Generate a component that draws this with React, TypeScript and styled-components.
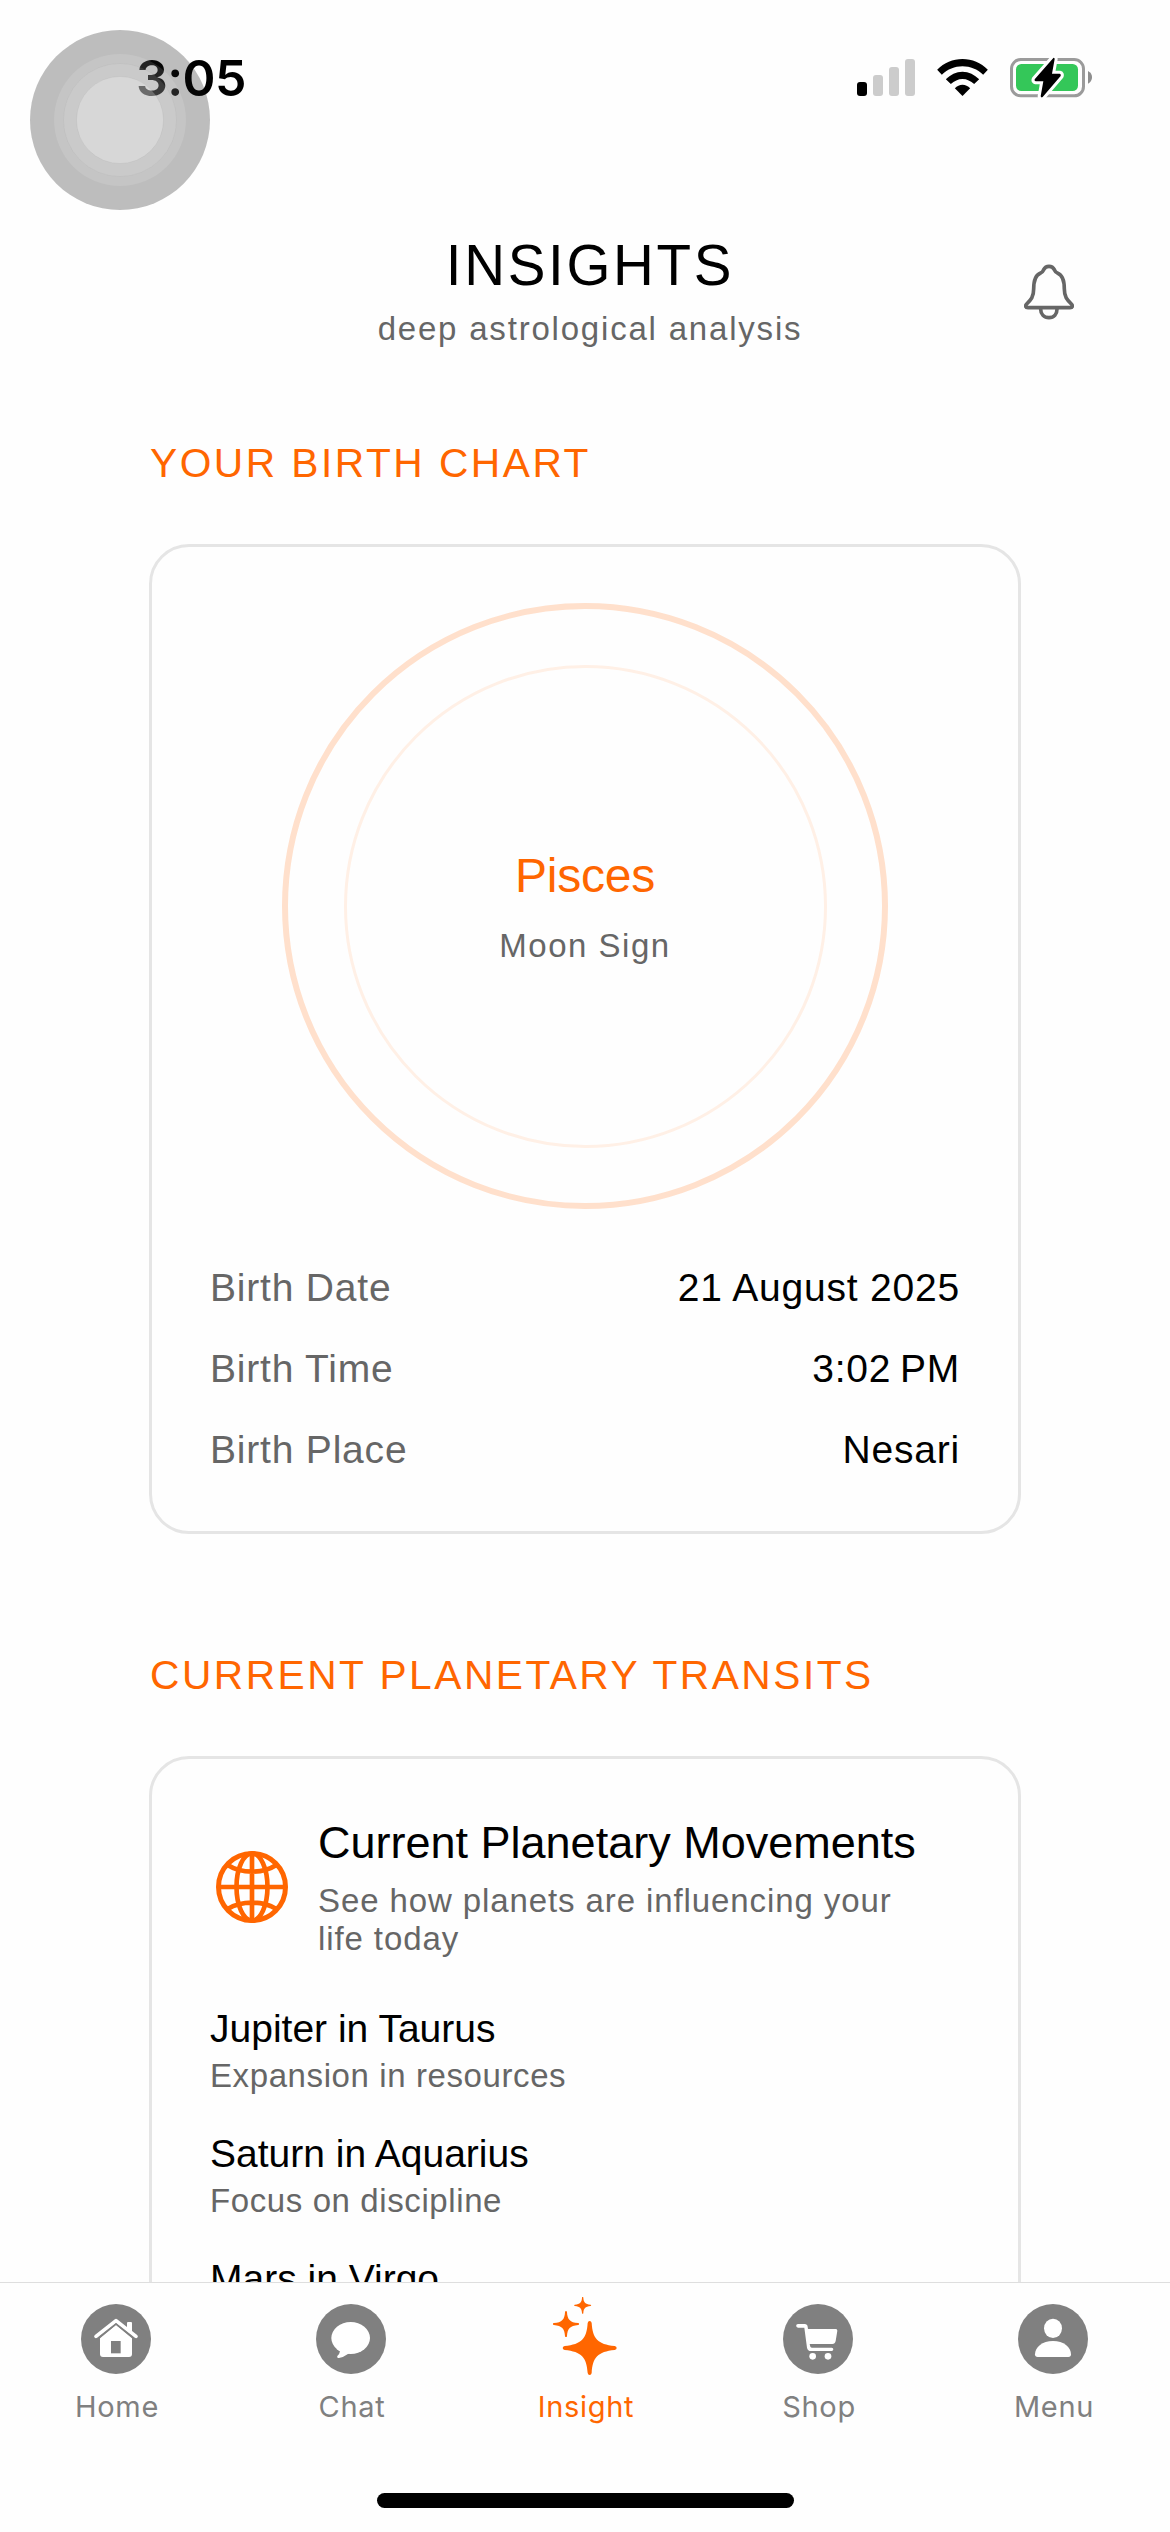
import React from "react";
import styled, { createGlobalStyle } from "styled-components";

const ORANGE = "#ff6600";
const GREY = "#666666";
const TAB_GREY = "#808080";

const GlobalStyle = createGlobalStyle`
  * { box-sizing: border-box; }
  html, body { margin: 0; padding: 0; background: #fff; }
  body { font-family: "Liberation Sans", Arial, sans-serif; color: #000; }
`;

const Screen = styled.div`
  position: relative;
  display: flex;
  flex-direction: column;
  width: 1170px;
  height: 2532px;
  overflow: hidden;
  background: #fefefe;
`;

const StatusBar = styled.div`
  display: flex;
  justify-content: space-between;
  flex: none;
  height: 180px;
  padding: 48px 76px 0 136px;
`;

const Clock = styled.div`
  font-family: Inter, "Liberation Sans", sans-serif;
  font-size: 50px;
  font-weight: 600;
  line-height: 60px;
  letter-spacing: -0.6px;
`;

const StatusIcons = styled.div`
  display: flex;
  gap: 22px;
  padding-top: 8px;
  height: 44px;
`;

const TouchButton = styled.div`
  position: absolute;
  left: 30px;
  top: 30px;
  width: 180px;
  height: 180px;
`;

const Scroll = styled.main`
  flex: 1;
  min-height: 0;
  overflow: hidden;
`;

const Header = styled.header`
  display: grid;
  grid-template-columns: 146px 1fr 146px;
  padding-top: 53px;
  height: 259px;
`;

const HeaderText = styled.div`
  grid-column: 2;
  display: flex;
  flex-direction: column;
  align-items: center;
  gap: 10px;
  padding-left: 10px;
`;

const BellSlot = styled.div`
  padding-top: 31px;
`;

const Title = styled.h1`
  margin: 0;
  font-size: 56.5px;
  font-weight: 400;
  line-height: 66px;
  letter-spacing: 2.7px;
`;

const Subtitle = styled.p`
  margin: 0;
  font-size: 33px;
  line-height: 40px;
  letter-spacing: 1.8px;
  color: ${GREY};
`;

const Section = styled.section`
  padding: 0 149px;
  margin-bottom: 117px;
`;

const SectionTitle = styled.h2`
  margin: 0 0 57px;
  padding-left: 1px;
  font-size: 40.7px;
  font-weight: 400;
  line-height: 48px;
  letter-spacing: 2.5px;
  white-space: nowrap;
  color: ${ORANGE};
`;

const Card = styled.div`
  border: 3px solid #e5e5e5;
  border-radius: 40px;
  padding: 56px 58px 57px;
`;

const OuterRing = styled.div`
  display: flex;
  align-items: center;
  justify-content: center;
  width: 606px;
  height: 606px;
  margin: 0 auto;
  border: 6px solid #ffe0cc;
  border-radius: 50%;
`;

const InnerRing = styled.div`
  display: flex;
  flex-direction: column;
  align-items: center;
  width: 483px;
  height: 483px;
  padding-top: 179px;
  border: 3px solid #fff0e6;
  border-radius: 50%;
`;

const Sign = styled.div`
  font-size: 48px;
  line-height: 58px;
  letter-spacing: -0.2px;
  color: ${ORANGE};
`;

const SignCaption = styled.div`
  margin-top: 21px;
  font-size: 33px;
  line-height: 40px;
  letter-spacing: 1.5px;
  color: ${GREY};
`;

const Facts = styled.dl`
  display: flex;
  flex-direction: column;
  gap: 33px;
  margin: 55px 0 0;
`;

const Fact = styled.div`
  display: flex;
  justify-content: space-between;
  font-size: 39px;
  line-height: 48px;
  letter-spacing: 0.8px;
`;

const FactLabel = styled.dt`
  color: ${GREY};
`;

const FactValue = styled.dd`
  margin: 0;
`;

const Intro = styled.div`
  display: flex;
  align-items: center;
  gap: 24px;
  padding-top: 1px;
  margin-bottom: 48px;
`;

const GlobeSlot = styled.div`
  display: flex;
  justify-content: center;
  flex: none;
  width: 84px;
`;

const IntroTitle = styled.h3`
  margin: 0 0 12px;
  font-size: 45px;
  font-weight: 400;
  line-height: 54px;
  white-space: nowrap;
`;

const IntroText = styled.p`
  margin: 0;
  font-size: 33px;
  line-height: 38px;
  letter-spacing: 0.9px;
  color: ${GREY};
`;

const Transits = styled.div`
  display: flex;
  flex-direction: column;
  gap: 36px;
`;

const TransitName = styled.div`
  font-size: 39px;
  line-height: 46px;
`;

const TransitNote = styled.div`
  margin-top: 5px;
  font-size: 33px;
  line-height: 38px;
  letter-spacing: 0.6px;
  color: ${GREY};
`;

const TabBar = styled.nav`
  display: grid;
  grid-template-columns: 232px 238px 230px 236px 234px;
  grid-template-rows: 210px 15px;
  flex: none;
  height: 250px;
  border-top: 1px solid #dedede;
`;

const Tab = styled.div<{ $active?: boolean }>`
  display: flex;
  flex-direction: column;
  align-items: center;
  padding-top: 14px;
  color: ${(p) => (p.$active ? ORANGE : TAB_GREY)};
`;

const TabLabel = styled.span`
  margin-top: 12px;
  padding-left: 2px;
  font-family: Inter, "Liberation Sans", sans-serif;
  font-size: 29px;
  line-height: 36px;
  letter-spacing: 0.7px;
`;

const HomeIndicator = styled.div`
  grid-column: 1 / -1;
  justify-self: center;
  width: 417px;
  height: 15px;
  border-radius: 8px;
  background: #000;
`;

const Signal = () => (
  <svg width="58" height="40" viewBox="856 56 58 40">
    <rect x="856" y="82" width="10" height="14" rx="3" />
    <g fill="#cccccc">
      <rect x="872" y="75" width="10" height="21" rx="3" />
      <rect x="888" y="67" width="10" height="29" rx="3" />
      <rect x="904" y="59" width="10" height="37" rx="3" />
    </g>
  </svg>
);

const Wifi = () => (
  <svg width="51" height="40" viewBox="409 108 152 120">
    <path d="M409 149 C430 128 456 117 485 117 C514 117 540 128 561 149 L547 164 C530 148 508 139 485 139 C462 139 440 148 423 164Z" />
    <path d="M435 178 C449 164 466 155 485 155 C504 155 521 164 535 178 L520 192 C510 183 498 177 485 177 C472 177 460 183 450 192Z" />
    <path d="M462 205 C469 198 476 194 485 194 C494 194 501 198 508 205 L485 228Z" />
  </svg>
);

const Battery = () => (
  <svg width="84" height="42" viewBox="627 108 252 126">
    <rect x="631.5" y="118.5" width="216" height="109" rx="28" fill="none" stroke="#9b9b9b" strokeWidth="9" />
    <path d="M861 153 Q873 159 873 172 Q873 185 861 191Z" fill="#8e8e8e" />
    <rect x="645" y="132" width="186" height="81" rx="16" fill="#34c759" />
    <path
      d="M757 114 L701 178 Q699 183 704 184 H727 L719 229 Q721 234 725 231 L779 168 Q781 162 776 161 H753 L761 117 Q760 112 757 114Z"
      stroke="#fff"
      strokeWidth="18"
      strokeLinejoin="round"
      paintOrder="stroke"
    />
  </svg>
);

const Bell = () => (
  <svg width="50" height="56" viewBox="672 731 150 168" fill="none" stroke={GREY} strokeWidth="11" strokeLinejoin="round">
    <path d="M684 862 C676 862 675 856 680 851 C693 838 701 830 701 806 C701 780 708 763 722 758 C728 756 729 752 731 748 C734 742 740 738 747 738 C754 738 760 742 763 748 C765 752 766 756 772 758 C786 763 793 780 793 806 C793 830 801 838 814 851 C819 856 818 862 810 862Z" />
    <path d="M722 866 C722 882 732 892 747 892 C762 892 771 882 771 866" />
  </svg>
);

const Globe = () => (
  <svg width="72" height="72" viewBox="-108 -108 216 216" fill="none" stroke={ORANGE} strokeWidth="14">
    <circle r="100.5" strokeWidth="15" />
    <ellipse rx="46.5" ry="101" />
    <path d="M0 -101V101M-101 0H101M-73 -66Q-42 -46 0 -46Q42 -46 73 -66M-73 66Q-42 47 0 47Q42 47 73 66" />
  </svg>
);

const TabIcon = ({ children }: { children: React.ReactNode }) => (
  <svg width="80" height="80" viewBox="-120 -126 240 240" fill="currentColor">
    {children}
  </svg>
);

const Disc = () => <circle r="105" />;

const HomeIcon = () => (
  <TabIcon>
    <Disc />
    <g fill="#fff">
      <path d="M33 -49 Q33 -51 36 -51 H45 Q48 -51 48 -48 V-20 L33 -32Z" />
      <path d="M-48 -2 L0 -42 L48 -2 V45 Q48 54 39 54 H-39 Q-48 54 -48 45Z" />
    </g>
    <path d="M-60 -8 L0 -55 L60 -8" fill="none" stroke="#fff" strokeWidth="11" strokeLinecap="round" strokeLinejoin="round" />
    <path d="M-52 -3 L0 -45 L52 -3" fill="none" stroke="currentColor" strokeWidth="4" />
    <rect x="-15" y="6" width="29" height="37" />
  </TabIcon>
);

const ChatIcon = () => (
  <TabIcon>
    <Disc />
    <g fill="#fff">
      <ellipse cx="-1" cy="-3" rx="58" ry="48" />
      <path d="M-44 30 L-33 37 Q-34 45 -41 51 Q-43 57 -36 57 Q-22 54 -8 44 L0 40Z" />
    </g>
  </TabIcon>
);

const STAR =
  "M-6 -75 Q-5 -81 0 -81 Q5 -81 6 -75 C9 -28 24 -11 75 -6 Q81 -5 81 0 Q81 5 75 6 C24 11 9 28 6 75 Q5 81 0 81 Q-5 81 -6 75 C-9 28 -24 11 -75 6 Q-81 5 -81 0 Q-81 -5 -75 -6 C-24 -11 -9 -28 -6 -75Z";

const InsightIcon = () => (
  <TabIcon>
    <path d={STAR} transform="translate(14 27)" />
    <path d={STAR} transform="translate(-57 -45) scale(0.485)" />
    <path d={STAR} transform="translate(-7 -101) scale(0.315)" />
  </TabIcon>
);

const ShopIcon = () => (
  <TabIcon>
    <Disc />
    <g fill="#fff" transform="translate(-864 -177)">
      <path d="M804 132 H824 Q832 132 833 140 L834 147 H918 Q922 147 922 152 L917 183 Q915 192 907 192 H839 Q840 202 845 203 H905 A5 5 0 0 1 905 213 H843 Q833 213 831 203 L823 143 H804 A5.5 5.5 0 0 1 804 132Z" />
      <circle cx="848" cy="229" r="10" />
      <circle cx="894" cy="229" r="10" />
    </g>
  </TabIcon>
);

const MenuIcon = () => (
  <TabIcon>
    <Disc />
    <g fill="#fff">
      <ellipse cy="-32" rx="27" ry="29" />
      <path d="M-54 46 C-54 24 -32 6 0 6 C32 6 54 24 54 46 Q54 54 46 54 H-46 Q-54 54 -54 46Z" />
    </g>
  </TabIcon>
);

const facts = [
  ["Birth Date", "21 August 2025"],
  ["Birth Time", "3:02\u202fPM"],
  ["Birth Place", "Nesari"],
];

const transits = [
  ["Jupiter in Taurus", "Expansion in resources"],
  ["Saturn in Aquarius", "Focus on discipline"],
  ["Mars in Virgo", ""],
];

const tabs = [
  { label: "Home", Icon: HomeIcon },
  { label: "Chat", Icon: ChatIcon },
  { label: "Insight", Icon: InsightIcon, active: true },
  { label: "Shop", Icon: ShopIcon },
  { label: "Menu", Icon: MenuIcon },
];

export default function App() {
  return (
    <>
      <GlobalStyle />
      <Screen>
        <StatusBar>
          <Clock>3:05</Clock>
          <StatusIcons>
            <Signal />
            <Wifi />
            <Battery />
          </StatusIcons>
        </StatusBar>

        <Scroll>
          <Header>
            <HeaderText>
              <Title>INSIGHTS</Title>
              <Subtitle>deep astrological analysis</Subtitle>
            </HeaderText>
            <BellSlot>
              <Bell />
            </BellSlot>
          </Header>

          <Section>
            <SectionTitle>YOUR BIRTH CHART</SectionTitle>
            <Card>
              <OuterRing>
                <InnerRing>
                  <Sign>Pisces</Sign>
                  <SignCaption>Moon Sign</SignCaption>
                </InnerRing>
              </OuterRing>
              <Facts>
                {facts.map(([label, value]) => (
                  <Fact key={label}>
                    <FactLabel>{label}</FactLabel>
                    <FactValue>{value}</FactValue>
                  </Fact>
                ))}
              </Facts>
            </Card>
          </Section>

          <Section>
            <SectionTitle>CURRENT PLANETARY TRANSITS</SectionTitle>
            <Card>
              <Intro>
                <GlobeSlot>
                  <Globe />
                </GlobeSlot>
                <div>
                  <IntroTitle>Current Planetary Movements</IntroTitle>
                  <IntroText>
                    See how planets are influencing your
                    <br />
                    life today
                  </IntroText>
                </div>
              </Intro>
              <Transits>
                {transits.map(([name, note]) => (
                  <div key={name}>
                    <TransitName>{name}</TransitName>
                    {note && <TransitNote>{note}</TransitNote>}
                  </div>
                ))}
              </Transits>
            </Card>
          </Section>
        </Scroll>

        <TabBar>
          {tabs.map(({ label, Icon, active }) => (
            <Tab key={label} $active={active}>
              <Icon />
              <TabLabel>{label}</TabLabel>
            </Tab>
          ))}
          <HomeIndicator />
        </TabBar>

        <TouchButton>
          <svg width="180" height="180" viewBox="-90 -90 180 180">
            <circle r="90" fill="rgba(20,20,20,0.28)" />
            <circle r="66" fill="rgba(255,255,255,0.12)" />
            <circle r="56.5" fill="rgba(255,255,255,0.1)" stroke="rgba(0,0,0,0.03)" />
            <circle r="43.5" fill="rgba(255,255,255,0.25)" stroke="rgba(0,0,0,0.04)" />
          </svg>
        </TouchButton>
      </Screen>
    </>
  );
}
